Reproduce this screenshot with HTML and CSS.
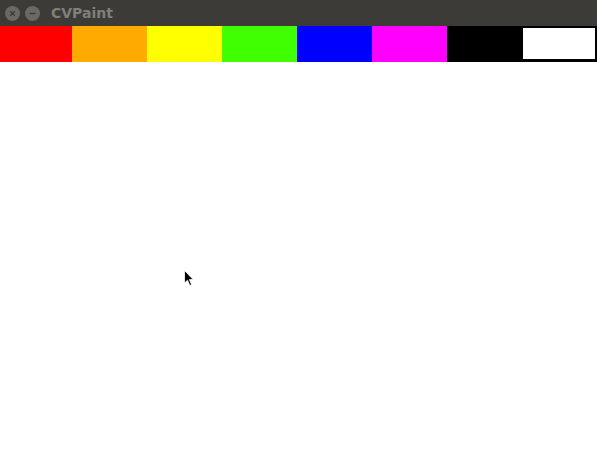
FILE: index.html
```html
<!DOCTYPE html>
<html>
<head>
<meta charset="utf-8">
<link rel="stylesheet" href="styles.css">
</head>
<body>
<div class="window">
  <div class="titlebar">
    <span class="btn close"><svg width="15" height="15" viewBox="0 0 15 15"><path d="M5.2 5.2 L9.8 9.8 M9.8 5.2 L5.2 9.8" stroke="#3c3b37" stroke-width="1.4"/></svg></span>
    <span class="btn min"><svg width="15" height="15" viewBox="0 0 15 15"><path d="M4.5 7.5 H10.5" stroke="#3c3b37" stroke-width="1.4"/></svg></span>
    <span class="title">CVPaint</span>
  </div>
  <div class="palette">
    <div class="sw red"></div>
    <div class="sw orange"></div>
    <div class="sw yellow"></div>
    <div class="sw green"></div>
    <div class="sw blue"></div>
    <div class="sw magenta"></div>
    <div class="sw black"></div>
    <div class="sw white"><div class="inner"></div></div>
  </div>
  <div class="canvas">
    <svg class="cursor" width="12" height="18" viewBox="0 0 12 18"><path d="M0.5 0.5 L0.5 13 L3.5 10.2 L5.8 15.5 L7.6 14.7 L5.4 9.6 L9.2 9.6 Z" fill="#000" stroke="#fff" stroke-width="0.8"/></svg>
  </div>
</div>
</body>
</html>
```
FILE: styles.css
```css
html, body { margin: 0; padding: 0; background: #fff; }
.window { width: 597px; height: 472px; display: flex; flex-direction: column; }
.titlebar {
  height: 26px; background: #3c3b37; display: flex; align-items: center;
  padding-left: 5px; box-sizing: border-box;
}
.btn { width: 15px; height: 15px; border-radius: 50%; background: #6a6964; display: flex; margin-right: 5px; }
.btn svg { display: block; }
.title {
  margin-left: 6px; font-family: "DejaVu Sans", sans-serif; font-weight: bold;
  font-size: 14px; color: #807f7a; line-height: 26px;
}
.palette { display: flex; height: 36px; }
.sw { height: 36px; }
.red { width: 72px; background: #ff0000; }
.orange { width: 75px; background: #ffaa00; }
.yellow { width: 75px; background: #ffff00; }
.green { width: 75px; background: #40ff00; }
.blue { width: 75px; background: #0000ff; }
.magenta { width: 75px; background: #ff00ff; }
.black { width: 75px; background: #000; }
.white { width: 75px; background: #000; box-sizing: border-box; padding: 2px 2px 3px 1px; }
.white .inner { background: #fff; height: 100%; }
.canvas { flex: 1; position: relative; background: #fff; }
.cursor { position: absolute; left: 184px; top: 208px; }
```
